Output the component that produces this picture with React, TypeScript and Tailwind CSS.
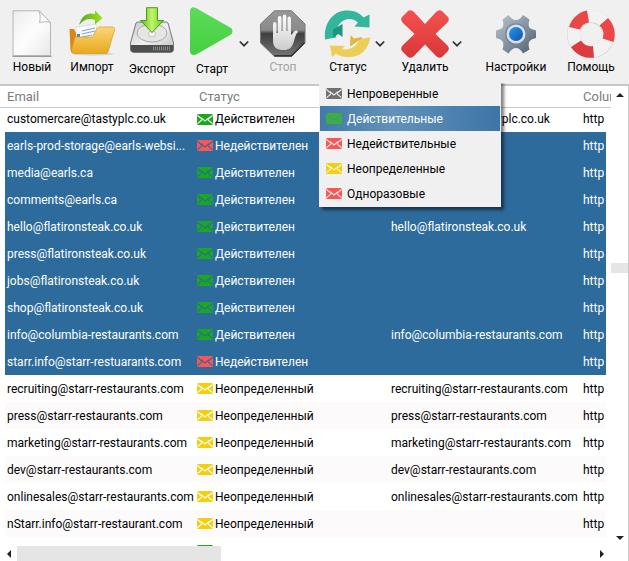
import React from "react";

type Status = "valid" | "invalid" | "unknown" | "unchecked";

const statusColor: Record<Status, string> = {
  valid: "#1ba81f",
  invalid: "#fb5555",
  unknown: "#f2d011",
  unchecked: "#707070",
};

const statusLabel: Record<Status, string> = {
  valid: "Действителен",
  invalid: "Недействителен",
  unknown: "Неопределенный",
  unchecked: "Непроверенный",
};

function Envelope({ color, line }: { color: string; line: string }) {
  return (
    <svg className="h-[11px] w-4 shrink-0" viewBox="0 0 16 11" aria-hidden="true">
      <rect width="16" height="11" rx="1.5" fill={color} />
      <path d="M.5 1.500 4.800 5.200M15.500 1.500 11.200 5.200M.5 9.600 5 5.800M15.500 9.600 11 5.800M4 3.600 8 7 12 3.600" fill="none" stroke={line} strokeWidth="1.100" />
    </svg>
  );
}

function NewIcon() {
  return (
    <svg className="size-12" viewBox="0 0 48 48" aria-hidden="true">
      <defs>
        <linearGradient id="paper" x1="0" y1="0" x2="1" y2="1">
          <stop offset="0" stopColor="#ededed" />
          <stop offset=".5" stopColor="#fdfdfd" />
          <stop offset="1" stopColor="#e8e8e8" />
        </linearGradient>
      </defs>
      <path d="M4.500 46.300H43.500" stroke="#9a9a9a" strokeWidth="1.500" />
      <path d="M5 .8H31L42.500 12.500V45.500H5Z" fill="url(#paper)" stroke="#b5b5b5" />
      <path d="M31 .8C32.500 5 32.500 9 31.500 12.500 36 11.500 39 11.500 42.500 12.500Z" fill="#fff" stroke="#b5b5b5" />
    </svg>
  );
}

function ImportIcon() {
  return (
    <svg className="size-12" viewBox="0 0 48 48" aria-hidden="true">
      <defs>
        <linearGradient id="folder" x1="0" y1="0" x2="0" y2="1">
          <stop offset="0" stopColor="#fbd579" />
          <stop offset="1" stopColor="#e8a91c" />
        </linearGradient>
        <linearGradient id="arrow" x1="0" y1="0" x2="1" y2="0">
          <stop offset="0" stopColor="#5aa81a" />
          <stop offset="1" stopColor="#a0e020" />
        </linearGradient>
      </defs>
      <ellipse cx="25" cy="44" rx="21" ry="1.500" fill="#d2d2d2" />
      <path d="M1.500 19H6L9 25 4 43 2.500 40Z" fill="#dd8512" />
      <path d="M8 17 28 14 30 32 9 38Z" fill="#f8fafc" stroke="#c7d0da" strokeWidth=".6" />
      <path d="M14 21 27 18M14 24 27 21M14 27 24 25" stroke="#8fa6c2" strokeWidth="1.200" />
      <path d="M9 24h3v3H9Z" fill="#2d8fd0" />
      <path d="M7 27H23C26 27 27 19 31 17H44C46 17 47 18 46.500 20L40 42Q39.500 43.500 38 43.500H6Q3 43.500 3.500 40Z" fill="url(#folder)" stroke="#d99b25" strokeWidth=".7" />
      <path d="M11 15C14 5 20 2 27 4V.5L34.500 8 27 14.500V10C21 8 16 9 11 15Z" fill="url(#arrow)" />
    </svg>
  );
}

function ExportIcon() {
  return (
    <svg className="size-12" viewBox="0 0 48 48" aria-hidden="true">
      <defs>
        <linearGradient id="disk" x1="0" y1="0" x2="1" y2="1">
          <stop offset="0" stopColor="#c9cac7" />
          <stop offset=".5" stopColor="#f1f1f0" />
          <stop offset="1" stopColor="#bbb" />
        </linearGradient>
        <linearGradient id="down" x1="0" y1="0" x2="1" y2="0">
          <stop offset="0" stopColor="#58bd15" />
          <stop offset=".5" stopColor="#c3f46b" />
          <stop offset="1" stopColor="#62c91a" />
        </linearGradient>
      </defs>
      <path d="M8 16Q9 15 11 15H37Q39 15 40 16L45.500 36V43Q45 45.500 42 45.500H6Q3 45.500 2.500 43V36Z" fill="url(#disk)" stroke="#777" />
      <ellipse cx="24" cy="26" rx="15" ry="9" fill="#e5e5e4" stroke="#aaa" />
      <ellipse cx="24" cy="27" rx="4" ry="2.500" fill="#f8f8f8" stroke="#aaa" strokeWidth=".7" />
      <path d="M3 38H45V43Q45 45 42 45H6Q3 45 3 43Z" fill="#4c4f4f" />
      <path d="M25 41.500H42" stroke="#898c89" strokeWidth="4" strokeDasharray="1 1" />
      <path d="M18.500 .7H29.500V13.500H35.500L24 25.500 12.500 13.500H18.500Z" fill="url(#down)" stroke="#45a00e" />
    </svg>
  );
}

function PlayIcon() {
  return (
    <svg className="size-12" viewBox="0 0 48 48" aria-hidden="true">
      <defs>
        <linearGradient id="play" x1="0" y1="0" x2="0" y2="1">
          <stop offset="0" stopColor="#5ddc5b" />
          <stop offset="1" stopColor="#45cf3f" />
        </linearGradient>
      </defs>
      <path d="M2 4C2 .5 5 -.8 8 1L43 21Q46 24 43 27.500L9 47C5 49 2 47.500 2 44Z" fill="url(#play)" />
    </svg>
  );
}

function StopIcon() {
  return (
    <svg className="size-12" viewBox="0 0 48 48" aria-hidden="true">
      <defs>
        <linearGradient id="stop" x1="0" y1="0" x2="0" y2="1">
          <stop offset="0" stopColor="#999" />
          <stop offset=".42" stopColor="#8a8a8a" />
          <stop offset=".5" stopColor="#3f3f3f" />
          <stop offset="1" stopColor="#777" />
        </linearGradient>
        <linearGradient id="hand" x1="0" y1="0" x2="0" y2="1">
          <stop offset="0" stopColor="#fff" />
          <stop offset="1" stopColor="#ccc" />
        </linearGradient>
      </defs>
      <path d="M15.500 .8H32.500L46 14V33L32.500 46.500H15.500L1.500 33V14Z" fill="url(#stop)" stroke="#777" />
      <path d="M15.500 45.700H32.500L45.500 32.700" fill="none" stroke="#333" strokeWidth="1.500" />
      <path d="M14 14Q14 12 15.700 12T17.500 14V23H18.800V8Q18.800 6 20.700 6T22.500 8V21H23.700V6.500Q23.700 4.500 25.500 4.500T27.300 6.500V21H28.500V8.500Q28.500 6.500 30.200 6.500T32 8.500V25L34 23C36 20 38 20 39 22 36.500 24 36 28 35 31 33 38 30 40 25 40 18 40 14 38 14 30Z" fill="url(#hand)" />
    </svg>
  );
}

function StatusIcon() {
  return (
    <svg className="size-12" viewBox="0 0 48 48" aria-hidden="true">
      <path d="M1 29.500C-.5 12 10 .5 23 .5 31 .3 36 3.500 39.500 7.500L45.500 4.500V17.500L30.500 16.500 34 12.500C29 8 22 8 18 11.500 13 15.500 12 20 12 27.500Z" fill="#33b69c" />
      <path d="M9 19.500 18.500 14V27L14.500 24 9 27.500Z" fill="#1c967c" />
      <path d="M46.500 27.500C44 40 36 47 25 47 18 47 14 45.500 12 43.500L8 47 6 35.500 21 36 18 38.800C25 41 32 37 36 29Z" fill="#eccd56" />
      <path d="M38 28.500 26 36.500 26.500 25 30 28.500 38 27Z" fill="#dfb63e" />
    </svg>
  );
}

function DeleteIcon() {
  return (
    <svg className="size-12" viewBox="0 0 48 48" aria-hidden="true">
      <defs>
        <linearGradient id="cross" x1="0" y1="0" x2="0" y2="48" gradientUnits="userSpaceOnUse">
          <stop offset="0" stopColor="#f45250" />
          <stop offset="1" stopColor="#d93639" />
        </linearGradient>
      </defs>
      <path d="M7 1Q10-1 13 2L24 14 35 2Q38-1 41 1L47 7Q49 10 46 13L34.500 24 46 35Q49 38 47 41L41 47Q38 49 35 46L24 34.500 13 46Q10 49 7 47L1 41Q-1 38 2 35L13.500 24 2 13Q-1 10 1 7Z" fill="url(#cross)" />
    </svg>
  );
}

function SettingsIcon() {
  return (
    <svg className="size-12" viewBox="0 0 48 48" aria-hidden="true">
      <defs>
        <linearGradient id="gear" x1="0" y1="0" x2="1" y2="1">
          <stop offset="0" stopColor="#bac5ce" />
          <stop offset=".5" stopColor="#8794a3" />
          <stop offset="1" stopColor="#4e5b69" />
        </linearGradient>
        <linearGradient id="core" x1="0" y1="0" x2="1" y2="1">
          <stop offset="0" stopColor="#1e9af0" />
          <stop offset="1" stopColor="#1551aa" />
        </linearGradient>
      </defs>
      <path d="M10.500 9.500 16.500 5Q20 10 24 10T31 5L37.500 9.500Q35 17 39.500 19L44 20.500V28L39.500 29.500Q35 32 37.500 39.500L31 43.500Q28 38 24 38T16.500 43.500L10.500 39.500Q13 32 8.500 29.500L4 28V20.500L8.500 19Q13 17 10.500 9.500Z" fill="url(#gear)" />
      <circle cx="24" cy="24" r="10.800" fill="#74859b" />
      <circle cx="24" cy="24" r="9.500" fill="#d9e1f1" />
      <circle cx="24" cy="24" r="7" fill="url(#core)" />
    </svg>
  );
}

function HelpIcon() {
  return (
    <svg className="size-12" viewBox="0 0 48 48" aria-hidden="true">
      <circle cx="24" cy="24" r="17.500" fill="none" stroke="#c8c8c8" strokeWidth="13" />
      <circle cx="24" cy="23.600" r="17.500" fill="none" stroke="#f2f2f2" strokeWidth="12.500" />
      <path d="M2 17A23.700 23.700 0 0 1 20 .4L22 12.300A12 12 0 0 0 13 19.500Z" fill="#e94748" />
      <path d="M41 8A23.700 23.700 0 0 1 46.500 32L35.500 28.500A12 12 0 0 0 32.500 15.500Z" fill="#e94748" />
      <path d="M27 47.600A23.700 23.700 0 0 1 4 37L14 30.500A12 12 0 0 0 26 36Z" fill="#dc3c3f" />
    </svg>
  );
}

function ToolButton({ label, icon, className = "", disabled = false }: { label: string; icon: React.ReactNode; className?: string; disabled?: boolean }) {
  return (
    <button type="button" disabled={disabled} className={`flex shrink-0 flex-col items-center whitespace-nowrap disabled:text-[#a3a3a3] ${className}`}>
      {icon}
      <span className="leading-4">{label}</span>
    </button>
  );
}

function DropButton({ label }: { label: string }) {
  return (
    <button type="button" aria-label={label} className="mt-10 flex h-2 w-2.5 shrink-0 items-center">
      <svg className="h-2 w-2.5" viewBox="0 0 10 8" aria-hidden="true">
        <path d="M.8 1.500 5 5.700 9.200 1.500" fill="none" stroke="#333" strokeWidth="1.700" />
      </svg>
    </button>
  );
}

const menu: { label: string; status: Status; active?: boolean }[] = [
  { label: "Непроверенные", status: "unchecked" },
  { label: "Действительные", status: "valid", active: true },
  { label: "Недействительные", status: "invalid" },
  { label: "Неопределенные", status: "unknown" },
  { label: "Одноразовые", status: "invalid" },
];

function StatusMenu() {
  return (
    <div role="menu" className="absolute top-20 left-[-2px] z-10 w-[182px] border border-[#f0f0f0] bg-[#f0f0f0] [clip-path:inset(3px_-8px_-8px_0)] shadow-[3px_3px_3px_rgba(0,0,0,0.5)]">
      {menu.map((m) => (
        <button
          key={m.label}
          type="button"
          role="menuitem"
          className={`flex h-[25px] w-full items-center gap-[5px] pl-1.5 ${m.active ? "bg-linear-to-r from-[#4179a9] via-[#6292bb] via-40% to-[#3c75a7] text-white" : ""}`}
        >
          <Envelope color={m.active ? "#39b23c" : statusColor[m.status]} line={m.active ? "#4b9376" : "#f0f0f0"} />
          {m.label}
        </button>
      ))}
    </div>
  );
}

type Row = { email: string; status: Status; second?: string; selected?: boolean };

const rows: Row[] = [
  { email: "customercare@tastyplc.co.uk", status: "valid", second: "customercare@tastyplc.co.uk" },
  { email: "earls-prod-storage@earls-websi...", status: "invalid", selected: true },
  { email: "media@earls.ca", status: "valid", selected: true },
  { email: "comments@earls.ca", status: "valid", selected: true },
  { email: "hello@flatironsteak.co.uk", status: "valid", second: "hello@flatironsteak.co.uk", selected: true },
  { email: "press@flatironsteak.co.uk", status: "valid", selected: true },
  { email: "jobs@flatironsteak.co.uk", status: "valid", selected: true },
  { email: "shop@flatironsteak.co.uk", status: "valid", selected: true },
  { email: "info@columbia-restaurants.com", status: "valid", second: "info@columbia-restaurants.com", selected: true },
  { email: "starr.info@starr-restuarants.com", status: "invalid", selected: true },
  { email: "recruiting@starr-restaurants.com", status: "unknown", second: "recruiting@starr-restaurants.com" },
  { email: "press@starr-restaurants.com", status: "unknown", second: "press@starr-restaurants.com" },
  { email: "marketing@starr-restaurants.com", status: "unknown", second: "marketing@starr-restaurants.com" },
  { email: "dev@starr-restaurants.com", status: "unknown", second: "dev@starr-restaurants.com" },
  { email: "onlinesales@starr-restaurants.com", status: "unknown", second: "onlinesales@starr-restaurants.com" },
  { email: "nStarr.info@starr-restaurant.com", status: "unknown" },
];

function EmailTable() {
  return (
    <table className="w-full table-fixed border-separate border-spacing-0 text-left">
      <colgroup>
        <col className="w-[197px]" />
        <col className="w-48" />
        <col className="w-48" />
        <col />
      </colgroup>
      <thead>
        <tr className="h-[22px] text-[13px] leading-5 text-[#7c7c7c]">
          <th className="border-b border-[#c8c8c8] pl-[7px] font-normal">Email</th>
          <th className="border-b border-[#c8c8c8] pl-0.5 font-normal">Статус</th>
          <th className="border-b border-[#c8c8c8]" />
          <th className="overflow-hidden border-b border-[#c8c8c8] pl-0.5 font-normal">Column</th>
        </tr>
      </thead>
      <tbody>
        {rows.map((r, i) => (
          <tr
            key={r.email}
            className={`${i === 0 ? "h-6 *:pb-0.5" : "h-[27px]"} ${r.selected ? "bg-[#2d6b9d] text-white" : i % 2 ? "bg-[#fcfafb]" : ""}`}
          >
            <td className="truncate border-l-[5px] border-white pl-0.5">{r.email}</td>
            <td>
              <span className="flex items-center gap-0.5">
                <Envelope color={statusColor[r.status]} line={r.selected ? "#2d6b9d" : "#ffffff"} />
                {statusLabel[r.status]}
              </span>
            </td>
            <td className="truncate pl-0.5">{r.second}</td>
            <td className="overflow-hidden border-r-[5px] border-white pl-0.5">http</td>
          </tr>
        ))}
        <tr className="h-[27px]">
          <td />
          <td>
            <Envelope color={statusColor.valid} line="#ffffff" />
          </td>
          <td />
          <td />
        </tr>
      </tbody>
    </table>
  );
}

export default function App() {
  return (
    <div className="flex h-screen flex-col overflow-hidden bg-white font-[Roboto,'Noto_Sans',sans-serif] text-xs leading-4 text-black">
      <header className="flex h-[86px] shrink-0 items-start border-b-2 border-[#c8c8c8] bg-[#f0f0f0] pl-0.5">
        <ToolButton label="Новый" icon={<NewIcon />} className="w-[60px] gap-px pt-2.5" />
        <ToolButton label="Импорт" icon={<ImportIcon />} className="w-[60px] gap-px pt-2.5" />
        <ToolButton label="Экспорт" icon={<ExportIcon />} className="w-[60px] gap-1.5 pt-[7px]" />
        <div className="ml-[3px] flex shrink-0">
          <ToolButton label="Старт" icon={<PlayIcon />} className="w-[54px] gap-1.5 pt-[7px]" />
          <DropButton label="Варианты запуска" />
        </div>
        <ToolButton label="Стоп" icon={<StopIcon />} disabled className="ml-1 w-[60px] gap-px pt-2.5" />
        <div className="relative ml-2 flex shrink-0">
          <ToolButton label="Статус" icon={<StatusIcon />} className="w-[54px] gap-px pt-2.5" />
          <DropButton label="Выбор статуса" />
          <StatusMenu />
        </div>
        <div className="ml-[13px] flex shrink-0">
          <ToolButton label="Удалить" icon={<DeleteIcon />} className="w-[54px] gap-px pt-2.5" />
          <DropButton label="Варианты удаления" />
        </div>
        <ToolButton label="Настройки" icon={<SettingsIcon />} className="ml-6 w-[60px] gap-px pt-2.5" />
        <ToolButton label="Помощь" icon={<HelpIcon />} className="ml-[15px] w-[60px] gap-px pt-2.5" />
      </header>

      <main className="flex min-h-0 flex-1 border-r border-[#c8c8c8]">
        <div className="flex min-w-0 flex-1 flex-col">
          <div className="min-h-0 flex-1 overflow-hidden">
            <EmailTable />
          </div>
          <div className="flex h-[15px] shrink-0 items-center">
            <button type="button" aria-label="Влево" className="flex w-[17px] justify-center">
              <svg className="h-2 w-1" viewBox="0 0 4 8" aria-hidden="true"><path d="M4 0v8L0 4Z" fill="#222" /></svg>
            </button>
            <div className="h-full flex-1">
              <div className="h-full w-[35.4%] bg-[#e5e5e5]" />
            </div>
            <button type="button" aria-label="Вправо" className="flex w-[18px] justify-center">
              <svg className="h-2 w-1" viewBox="0 0 4 8" aria-hidden="true"><path d="M0 0v8L4 4Z" fill="#222" /></svg>
            </button>
          </div>
        </div>
        <div className="flex w-[17px] shrink-0 flex-col items-center pb-[15px]">
          <button type="button" aria-label="Вверх" className="flex h-[17px] items-center">
            <svg className="h-1 w-2" viewBox="0 0 8 4" aria-hidden="true"><path d="M0 4h8L4 0Z" fill="#222" /></svg>
          </button>
          <div className="flex w-full flex-1 flex-col">
            <div className="h-[37.5%]" />
            <div className="h-2.5 bg-[#e5e5e5]" />
          </div>
          <button type="button" aria-label="Вниз" className="flex h-[17px] items-center">
            <svg className="h-1 w-2" viewBox="0 0 8 4" aria-hidden="true"><path d="M0 0h8L4 4Z" fill="#222" /></svg>
          </button>
        </div>
      </main>
    </div>
  );
}
